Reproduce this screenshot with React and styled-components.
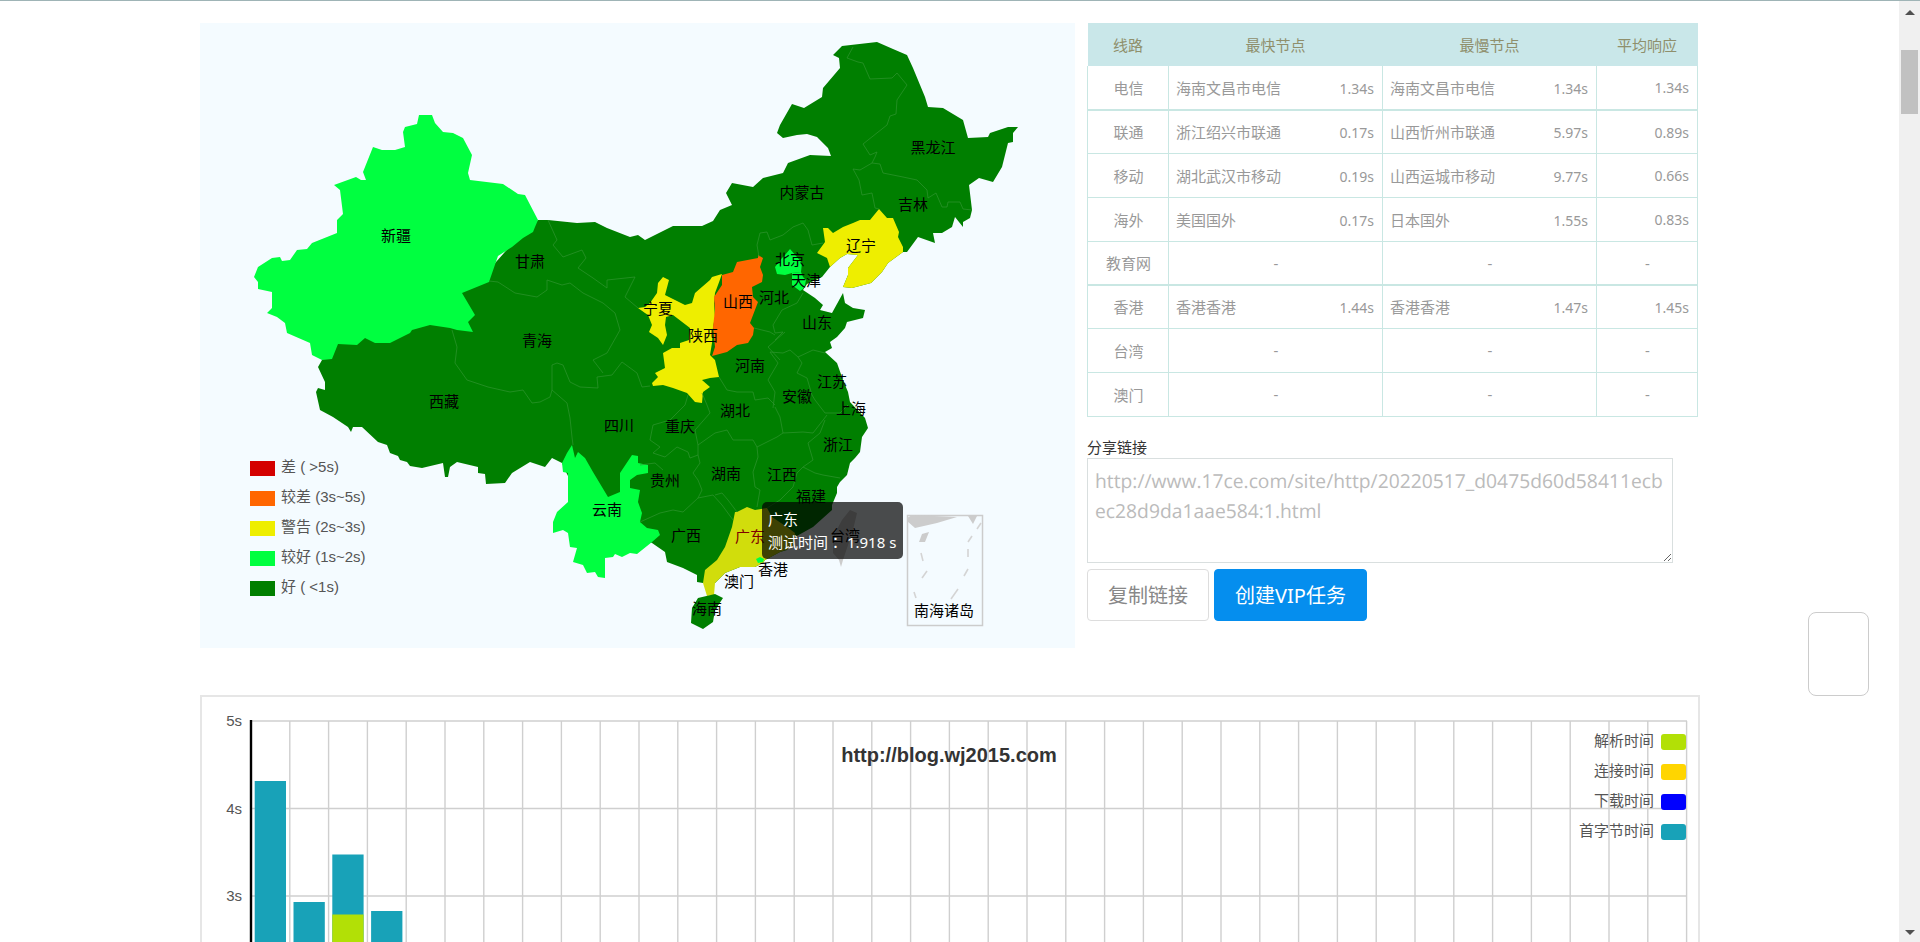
import React from 'react'
import styled, { createGlobalStyle } from 'styled-components'

const GlobalStyle = createGlobalStyle`
  html, body { margin: 0; padding: 0; height: 100%; overflow: hidden; background: #fff; }
  body { font-family: "Liberation Sans", "Noto Sans CJK SC", sans-serif; }
`

const CJK = '"Noto Sans CJK SC", sans-serif'

// map colours
const GOOD = '#007f00'
const FINE = '#00ff40'
const WARN = '#eeee00'
const SLOW = '#ff6600'
const BAD = '#d40000'

const Shell = styled.div`
  position: relative;
  display: flex;
  width: 1920px;
  height: 942px;
  overflow: hidden;
  border-top: 1px solid #9fb4b6;
  box-sizing: border-box;
`
const Page = styled.main`
  flex: 1;
  min-width: 0;
  padding: 22px 0 0 200px;
`
const TopRow = styled.div`
  display: flex;
  align-items: flex-start;
  gap: 12px;
`
const MapPanel = styled.section`
  position: relative;
  flex: none;
  width: 875px;
  height: 625px;
  background: #f4fbff;
`
const MapSvg = styled.svg`
  display: block;
`
const MapLabel = styled.text`
  font-family: ${CJK};
  font-size: 15px;
  text-anchor: middle;
  dominant-baseline: central;
  fill: ${p => p.$color || '#000'};
`
const MapLegend = styled.ul`
  position: absolute;
  left: 50px;
  top: 430px;
  margin: 0;
  padding: 0;
  list-style: none;
`
const MapLegendItem = styled.li`
  display: flex;
  align-items: center;
  gap: 6px;
  height: 30px;
  font-size: 15px;
  color: #555;
  font-family: "Liberation Sans", "Noto Sans CJK SC", sans-serif;
`
const MapLegendText = styled.span`
  margin-bottom: 5px;
`
const Swatch = styled.i`
  display: block;
  width: 25px;
  height: 15px;
  background: ${p => p.$color};
`
const Tooltip = styled.div`
  position: absolute;
  left: 562px;
  top: 479px;
  width: 141px;
  height: 57px;
  box-sizing: border-box;
  padding: 6px 6px;
  border-radius: 5px;
  background: rgba(0, 0, 0, 0.7);
  color: #fff;
  font-family: "Noto Sans", "Noto Sans CJK TC", sans-serif;
  font-size: 15px;
  line-height: 23px;
  white-space: nowrap;
`

const SideColumn = styled.aside`
  flex: none;
  width: 610px;
`
const SpeedTable = styled.table`
  width: 610px;
  border-collapse: collapse;
  table-layout: fixed;
  font-family: "Noto Sans", "Noto Sans CJK SC", sans-serif;
  font-size: 15px;
  color: #999;
`
const HeadCell = styled.th`
  height: 43px;
  padding: 0;
  background: #c9e7e9;
  color: #8f8f6c;
  font-weight: normal;
  text-align: center;
`
const Row = styled.tr`
  height: 43.75px;
  border-bottom: ${p => (p.$thick ? 2 : 1)}px solid #c9e7e3;
`
const Cell = styled.td`
  padding: 0 ${p => (p.$align === 'center' ? 6 : 8)}px 0 7px;
  border-left: 1px solid #c9e7e3;
  border-right: 1px solid #c9e7e3;
  text-align: ${p => p.$align || 'left'};
`
const NodeLine = styled.div`
  display: flex;
  align-items: baseline;
  justify-content: space-between;
`
const Seconds = styled.span`
  font-size: 14px;
`
const ShareLabel = styled.div`
  margin-top: 20px;
  height: 21px;
  line-height: 19px;
  font-family: ${CJK};
  font-size: 15px;
  color: #333;
`
const ShareBox = styled.textarea`
  display: block;
  width: 586px;
  height: 105px;
  box-sizing: border-box;
  margin: 0;
  padding: 7px 6px 7px 7px;
  border: 1px solid #d9dfdf;
  outline: none;
  font-family: "Open Sans", "Noto Sans CJK SC", sans-serif;
  font-size: 19.3px;
  text-rendering: geometricPrecision;
  line-height: 30px;
  color: #bbb;
  word-break: break-all;
`
const ButtonRow = styled.div`
  display: flex;
  gap: 5px;
  margin-top: 6px;
`
const Button = styled.button`
  height: 52px;
  box-sizing: border-box;
  width: ${p => p.$width}px;
  padding: 0;
  border: 1px solid ${p => (p.$primary ? '#058eee' : '#ddd')};
  border-radius: 4px;
  background: ${p => (p.$primary ? '#058eee' : '#fff')};
  color: ${p => (p.$primary ? '#fff' : '#888')};
  font-family: "Noto Sans", "Noto Sans CJK SC", sans-serif;
  font-size: 20px;
`

const ChartCard = styled.section`
  width: 1500px;
  height: 300px;
  box-sizing: border-box;
  margin-top: 47px;
  border: 2px solid #e6e6e6;
`
const ChartSvg = styled.svg`
  display: block;
`
const AxisLabel = styled.text`
  font-family: "Liberation Sans", sans-serif;
  font-size: 15px;
  fill: #555;
  text-anchor: end;
  dominant-baseline: central;
`
const ChartTitle = styled.text`
  font-family: "Liberation Sans", sans-serif;
  font-size: 20px;
  font-weight: bold;
  fill: #333;
  text-anchor: middle;
  dominant-baseline: central;
`
const ChartLegendText = styled.text`
  font-family: ${CJK};
  font-size: 15px;
  fill: #555;
  text-anchor: end;
  dominant-baseline: central;
`

const ScrollBar = styled.div`
  flex: none;
  display: flex;
  flex-direction: column;
  align-items: center;
  width: 21px;
  background: #f0f0f0;
`
const ScrollArrow = styled.span`
  width: 0;
  height: 0;
  border-left: 5px solid transparent;
  border-right: 5px solid transparent;
  ${p => (p.$down ? 'border-top: 5px solid #505050;' : 'border-bottom: 5px solid #505050;')}
  margin: ${p => (p.$down ? 'auto 0 7px' : '9px 0 0')};
`
const ScrollThumb = styled.span`
  width: 17px;
  height: 64px;
  margin-top: 35px;
  background: #c1c1c1;
`
const FloatWidget = styled.div`
  position: absolute;
  left: 1808px;
  top: 611px;
  width: 61px;
  height: 84px;
  box-sizing: border-box;
  border: 1px solid #ccc;
  border-radius: 8px;
  background: #fff;
`

const CHINA = `538,220 548,220 577,223 595,222 607,228 630,237 638,235 645,240 673,226 702,226 713,221 720,210 732,205 726,193 732,183 753,187 763,178 783,173 788,163 810,155 831,156 828,148 817,137 807,134 797,135 783,138 777,133 780,125 792,104 804,108 822,97 823,88 840,68 839,58 833,55 842,46 877,42 893,49 907,55 913,68 925,97 928,107 943,108 963,120 968,138 988,137 990,133 1008,127 1018,127 1013,133 1013,142 1008,143 1002,167 993,182 979,178 969,185 972,210 970,218 963,222 963,227 955,217 952,227 942,233 933,233 935,243 918,237 907,252 903,252 888,263 882,272 871,283 852,288 843,287 848,275 848,268 858,255 847,254 840,258 830,267 822,277 807,284 803,290 815,298 823,305 820,310 832,313 843,293 845,303 853,308 865,310 863,318 847,322 845,328 837,337 830,342 832,348 825,352 837,363 843,380 848,392 850,402 865,418 868,428 862,437 860,452 855,458 850,463 847,475 840,482 837,487 837,493 832,505 832,510 813,527 795,537 787,550 780,552 765,560 763,563 755,567 740,567 725,573 715,583 703,583 697,582 697,575 683,568 667,562 665,552 652,543 650,542 600,540 565,470 562,463 552,458 545,467 530,462 512,473 505,483 486,484 485,474 478,473 478,467 457,462 450,467 448,477 445,477 443,463 422,468 410,466 407,462 400,460 398,456 390,453 387,445 378,442 362,427 353,427 351,432 348,427 333,417 320,410 316,392 318,388 325,390 325,382 318,367 322,360 340,340 400,320 480,280 520,235`

const REGIONS = [
  { color: FINE, pts: '419,115 432,115 435,123 443,132 453,133 463,138 472,155 468,173 470,180 503,184 518,194 525,195 538,220 535,227 533,232 523,238 512,247 498,256 489,282 462,293 475,315 468,322 473,332 457,330 450,328 430,325 412,330 410,333 390,343 375,343 365,338 357,345 338,344 332,359 322,360 312,355 310,343 287,333 285,323 277,317 267,313 272,308 272,292 258,289 258,282 254,277 258,267 272,258 280,257 282,261 290,260 297,250 307,249 312,243 337,233 337,220 343,214 340,190 334,185 356,177 361,180 366,180 363,172 373,147 382,150 395,150 405,147 403,132 405,127 417,124' },
  { color: FINE, pts: '562,463 563,472 568,473 568,502 557,512 553,522 553,533 563,530 568,533 570,547 577,548 573,562 583,565 587,573 595,572 598,577 605,578 605,558 613,557 615,554 622,557 630,553 637,554 652,542 660,535 658,530 647,528 640,522 642,513 638,502 640,490 630,488 630,480 637,475 648,473 648,465 638,463 638,456 632,455 620,473 620,492 608,497 593,472 585,458 578,452 575,458 572,445 567,453' },
  { color: WARN, pts: '638,308 645,307 650,303 657,293 658,283 663,277 669,280 665,295 675,300 685,305 692,303 695,293 710,280 712,277 722,274 718,285 715,293 714,303 715,317 713,327 712,343 710,355 715,360 719,377 710,378 702,380 710,387 703,392 702,403 695,402 687,393 673,388 663,385 653,386 652,383 658,377 655,373 665,368 663,353 672,348 680,348 680,343 689,340 690,328 673,315 666,317 665,325 667,335 663,345 658,338 649,332 652,325 648,315 645,313' },
  { color: SLOW, pts: '712,356 715,347 713,327 715,310 714,297 722,285 722,275 733,272 737,262 758,258 758,255 763,258 760,267 763,275 762,282 752,287 753,297 758,302 750,323 754,328 753,335 748,343 737,345 727,352' },
  { color: WARN, pts: '879,209 887,218 893,218 899,232 898,237 903,247 903,252 888,263 882,272 871,283 852,288 843,287 848,275 848,268 858,255 847,254 840,258 830,267 827,258 817,253 825,242 823,228 828,228 833,233 843,227 853,223 860,220 870,220' },
  { color: FINE, pts: '790,249 797,257 802,263 801,272 792,273 785,275 777,274 775,267 782,258 785,255' },
  { color: FINE, pts: '792,273 801,272 803,277 806,280 805,285 803,289 800,291 792,285 792,278' },
  { color: '#d1dd0c', pts: '737,512 747,507 755,510 767,508 772,517 787,527 795,533 793,547 780,552 765,560 763,563 755,567 740,567 725,573 715,583 714,595 707,596 703,583 705,570 717,560 725,547 732,527 735,512' },
  { color: FINE, pts: '756,559 760,557 764,559 763,562 758,563' },
  { color: GOOD, pts: '698,598 715,594 723,598 715,610 713,622 703,629 691,623 692,608' },
  { color: '#ccc', pts: '850,510 857,513 853,530 843,560 841,567 839,560 833,553 833,537 842,520' },
]

const BORDERS = [
  '853,47 847,58 858,62 863,63 870,79 892,78 897,73 907,85 897,100 896,114 890,116 887,125 863,144 870,155 877,152 875,157 872,163 860,170 853,169 859,180 862,195 872,193 875,208 879,209',
  '872,163 880,164 883,173 903,177 917,180 927,190 928,198 936,193 942,207 947,207 948,202 960,202 963,209 972,210',
  '823,243 812,245 808,230 803,223 793,227 783,235 770,240 767,232 760,233 757,245 759,257',
  '803,293 797,303 782,310 773,325 775,333 783,332 775,340',
  '754,328 770,332 775,335',
  '785,332 768,347 780,360',
  '719,377 727,390 737,392 753,392 755,400 768,398 775,405',
  '770,352 783,353 790,350 798,357 813,350 825,353',
  '770,352 778,363 768,380 775,392 773,408',
  '798,357 802,363 797,373 807,378 812,395 815,400 825,413 840,413 848,405',
  '775,407 780,417 783,433 777,437 757,447',
  '783,433 803,432 813,433 827,415',
  '808,443 813,460 803,467 815,473 823,475 840,478',
  '808,443 820,433 825,420',
  '757,447 758,457 753,472 755,487 760,490 757,507',
  '803,467 797,473 793,487 787,493 780,500 767,508',
  '698,445 715,433 727,430 733,440 753,440 757,447',
  '688,395 685,405 670,420 653,425 650,440 660,447 653,453 665,457 677,447 688,452 690,458 698,455 698,445 695,430 710,413 707,405 702,393',
  '640,522 660,513 673,510 683,512 698,498 713,495 722,505 733,520',
  '698,480 693,473 700,463 698,455',
  '698,498 702,490 698,480',
  '715,495 722,493 728,500 737,512',
  '640,465 655,463 663,470',
  '452,330 457,347 455,363 467,380 488,387 510,392 523,390 532,403 540,402 550,397 552,390',
  '552,390 567,403 570,418 572,437 573,445',
  '552,390 552,365 557,363 563,365 570,382 580,387 598,388 597,377 612,375 622,362 637,373 642,387 650,386',
  '489,281 498,282 515,293 537,297 547,290 547,280 562,285 570,283 583,293 603,303 615,313 620,330 607,353 593,360 603,373',
  '548,220 557,240 553,245 563,257 582,250 586,258 578,268 593,278 607,288 607,280 635,277 625,297 638,308',
]

const LABELS = [
  ['新疆', 396, 234], ['甘肃', 530, 260], ['黑龙江', 933, 146], ['吉林', 913, 203], ['内蒙古', 802, 191],
  ['辽宁', 861, 244], ['北京', 790, 258], ['天津', 806, 279], ['河北', 774, 296], ['山西', 738, 300],
  ['山东', 817, 321], ['宁夏', 658, 307], ['陕西', 703, 334], ['青海', 537, 339], ['西藏', 444, 400],
  ['四川', 619, 424], ['云南', 607, 508], ['河南', 750, 364], ['江苏', 832, 380], ['安徽', 797, 395],
  ['上海', 851, 407], ['湖北', 735, 409], ['重庆', 680, 425], ['浙江', 838, 443], ['贵州', 665, 479],
  ['湖南', 726, 472], ['江西', 782, 473], ['福建', 811, 495], ['广西', 686, 534], ['台湾', 845, 534],
  ['香港', 773, 568], ['澳门', 739, 580], ['海南', 707, 607], ['南海诸岛', 944, 609],
]

const ISLAND_DASHES = [
  [981, 523, 977, 529], [972, 536, 968, 542], [968, 549, 968, 557], [968, 569, 964, 576],
  [958, 589, 951, 599], [921, 553, 923, 561], [927, 571, 922, 578], [914, 592, 916, 598],
]

const MAP_LEGEND = [
  [BAD, '差 ( >5s)'],
  [SLOW, '较差 (3s~5s)'],
  [WARN, '警告 (2s~3s)'],
  [FINE, '较好 (1s~2s)'],
  [GOOD, '好 ( <1s)'],
]

const ROWS = [
  { line: '电信', fast: '海南文昌市电信', fastTime: '1.34s', slow: '海南文昌市电信', slowTime: '1.34s', avg: '1.34s', thick: true },
  { line: '联通', fast: '浙江绍兴市联通', fastTime: '0.17s', slow: '山西忻州市联通', slowTime: '5.97s', avg: '0.89s' },
  { line: '移动', fast: '湖北武汉市移动', fastTime: '0.19s', slow: '山西运城市移动', slowTime: '9.77s', avg: '0.66s' },
  { line: '海外', fast: '美国国外', fastTime: '0.17s', slow: '日本国外', slowTime: '1.55s', avg: '0.83s' },
  { line: '教育网', thick: true },
  { line: '香港', fast: '香港香港', fastTime: '1.44s', slow: '香港香港', slowTime: '1.47s', avg: '1.45s' },
  { line: '台湾' },
  { line: '澳门' },
]

const NodeCell = ({ name, time }) =>
  name ? (
    <Cell>
      <NodeLine>
        <span>{name}</span>
        <Seconds>{time}</Seconds>
      </NodeLine>
    </Cell>
  ) : (
    <Cell $align="center">-</Cell>
  )

const ChinaMap = () => (
  <MapSvg width="875" height="625" viewBox="200 23 875 625">
    <polygon points={CHINA} fill={GOOD} />
    {REGIONS.map((r, i) => (
      <polygon key={i} points={r.pts} fill={r.color} />
    ))}
    {BORDERS.map((pts, i) => (
      <polyline key={i} points={pts} fill="none" stroke="#2f952f" strokeWidth="0.7" />
    ))}
    <rect x="907.5" y="515.5" width="75" height="110" fill="none" stroke="#ccc" strokeWidth="1.5" />
    <polygon points="907,518 912,515 957,517 937,523 915,528 907,521" fill="#ccc" />
    <polygon points="968,516 977,516 973,524" fill="#ccc" />
    <polygon points="922,534 929,532 925,542 919,542" fill="#ccc" />
    {ISLAND_DASHES.map(([x1, y1, x2, y2], i) => (
      <line key={i} x1={x1} y1={y1} x2={x2} y2={y2} stroke="#d4d4d4" strokeWidth="1.6" />
    ))}
    {LABELS.map(([name, x, y]) => (
      <MapLabel key={name} x={x} y={y}>{name}</MapLabel>
    ))}
    <MapLabel x={750} y={535} $color="#800000">广东</MapLabel>
  </MapSvg>
)

const GRID_X = Array.from({ length: 37 }, (_, i) => 251 + 38.8 * (i + 1))
const GRID_Y = [721, 808.5, 896, 983.5]
const BAR_BLUE = '#18a2b8'
const BAR_GREEN = '#b2e006'
const BARS = [
  { x: 254.7, top: 781 },
  { x: 293.5, top: 902 },
  { x: 332.3, top: 854.5, split: 914.5 },
  { x: 371.1, top: 911 },
]
const CHART_LEGEND = [
  ['解析时间', BAR_GREEN, 742],
  ['连接时间', '#ffd500', 772],
  ['下载时间', '#0000ff', 802],
  ['首字节时间', BAR_BLUE, 832],
]

const TimingChart = () => (
  <ChartSvg width="1496" height="296" viewBox="202 697 1496 296">
    {GRID_Y.map(y => (
      <line key={y} x1="251" y1={y} x2="1687" y2={y} stroke="#cfcfcf" strokeWidth="1.4" />
    ))}
    {GRID_X.map(x => (
      <line key={x} x1={x} y1="721" x2={x} y2="993" stroke="#cfcfcf" strokeWidth="1.4" />
    ))}
    <line x1="251" y1="720" x2="251" y2="993" stroke="#000" strokeWidth="2.4" />
    <AxisLabel x="242" y="720">5s</AxisLabel>
    <AxisLabel x="242" y="808">4s</AxisLabel>
    <AxisLabel x="242" y="895">3s</AxisLabel>
    {BARS.map(b => (
      <g key={b.x}>
        <rect x={b.x} y={b.top} width="31.3" height={993 - b.top} fill={BAR_BLUE} />
        {b.split && <rect x={b.x} y={b.split} width="31.3" height={993 - b.split} fill={BAR_GREEN} />}
      </g>
    ))}
    <ChartTitle x="949" y="755">http://blog.wj2015.com</ChartTitle>
    {CHART_LEGEND.map(([name, color, y]) => (
      <g key={name}>
        <ChartLegendText x="1654" y={y - 3}>{name}</ChartLegendText>
        <rect x="1661" y={y - 8} width="25" height="16" rx="3" fill={color} />
      </g>
    ))}
  </ChartSvg>
)

const App = () => (
  <Shell>
    <GlobalStyle />
    <Page>
      <TopRow>
        <MapPanel>
          <ChinaMap />
          <MapLegend>
            {MAP_LEGEND.map(([color, text]) => (
              <MapLegendItem key={text}>
                <Swatch $color={color} />
                <MapLegendText>{text}</MapLegendText>
              </MapLegendItem>
            ))}
          </MapLegend>
          <Tooltip>
            广东
            <br />
            测试时间： 1.918 s
          </Tooltip>
        </MapPanel>
        <SideColumn>
          <SpeedTable>
            <colgroup>
              <col width="81" />
              <col width="214" />
              <col width="214" />
              <col width="101" />
            </colgroup>
            <thead>
              <tr>
                <HeadCell>线路</HeadCell>
                <HeadCell>最快节点</HeadCell>
                <HeadCell>最慢节点</HeadCell>
                <HeadCell>平均响应</HeadCell>
              </tr>
            </thead>
            <tbody>
              {ROWS.map(r => (
                <Row key={r.line} $thick={r.thick}>
                  <Cell $align="center">{r.line}</Cell>
                  <NodeCell name={r.fast} time={r.fastTime} />
                  <NodeCell name={r.slow} time={r.slowTime} />
                  <Cell $align={r.avg ? 'right' : 'center'}>{r.avg ? <Seconds>{r.avg}</Seconds> : '-'}</Cell>
                </Row>
              ))}
            </tbody>
          </SpeedTable>
          <ShareLabel>分享链接</ShareLabel>
          <ShareBox readOnly defaultValue="http://www.17ce.com/site/http/20220517_d0475d60d58411ecbec28d9da1aae584:1.html" />
          <ButtonRow>
            <Button $width={122}>复制链接</Button>
            <Button $primary $width={153}>创建VIP任务</Button>
          </ButtonRow>
        </SideColumn>
      </TopRow>
      <ChartCard>
        <TimingChart />
      </ChartCard>
    </Page>
    <ScrollBar>
      <ScrollArrow />
      <ScrollThumb />
      <ScrollArrow $down />
    </ScrollBar>
    <FloatWidget />
  </Shell>
)

export default App
